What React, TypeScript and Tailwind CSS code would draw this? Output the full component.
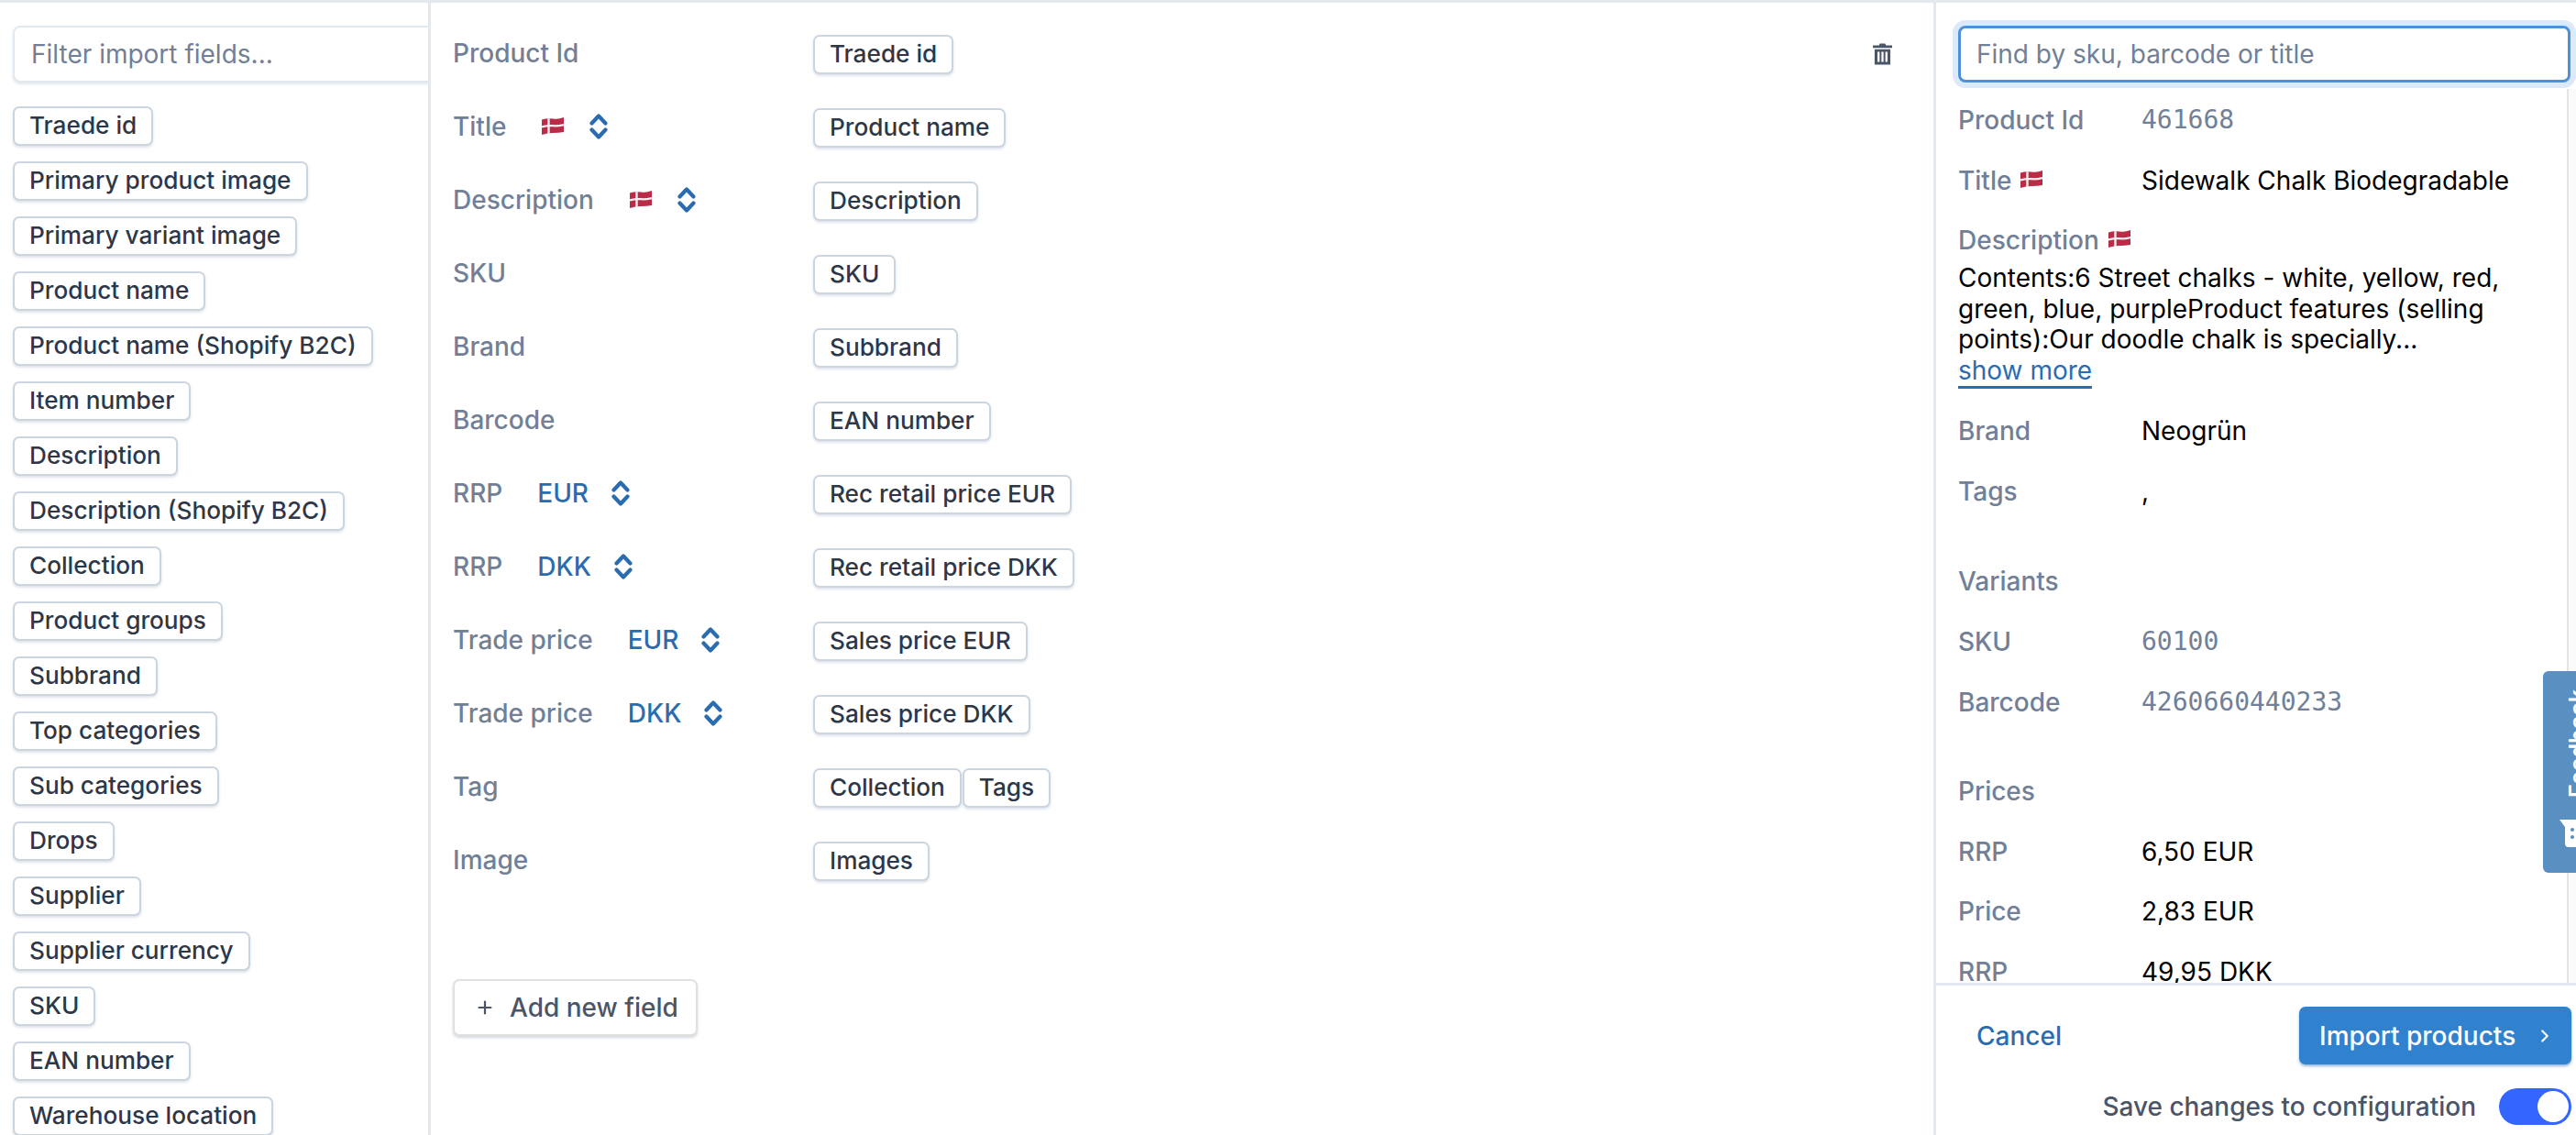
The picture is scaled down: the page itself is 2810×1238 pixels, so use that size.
import React from 'react';
import { Plus, ChevronRight } from 'lucide-react';

const importFields = [
  'Traede id',
  'Primary product image',
  'Primary variant image',
  'Product name',
  'Product name (Shopify B2C)',
  'Item number',
  'Description',
  'Description (Shopify B2C)',
  'Collection',
  'Product groups',
  'Subbrand',
  'Top categories',
  'Sub categories',
  'Drops',
  'Supplier',
  'Supplier currency',
  'SKU',
  'EAN number',
  'Warehouse location',
];

interface Mapping {
  label: string;
  flag?: boolean;
  currency?: string;
  chips: string[];
}

const mappings: Mapping[] = [
  { label: 'Product Id', chips: ['Traede id'] },
  { label: 'Title', flag: true, chips: ['Product name'] },
  { label: 'Description', flag: true, chips: ['Description'] },
  { label: 'SKU', chips: ['SKU'] },
  { label: 'Brand', chips: ['Subbrand'] },
  { label: 'Barcode', chips: ['EAN number'] },
  { label: 'RRP', currency: 'EUR', chips: ['Rec retail price EUR'] },
  { label: 'RRP', currency: 'DKK', chips: ['Rec retail price DKK'] },
  { label: 'Trade price', currency: 'EUR', chips: ['Sales price EUR'] },
  { label: 'Trade price', currency: 'DKK', chips: ['Sales price DKK'] },
  { label: 'Tag', chips: ['Collection', 'Tags'] },
  { label: 'Image', chips: ['Images'] },
];

const DanishFlag = ({ className = '' }: { className?: string }) => (
  <svg viewBox="0 0 24 19" className={`w-6 h-[19px] shrink-0 ${className}`}>
    <path d="M0 2.5 Q6 0.5 12 1.5 T24 0 V16 Q18 17 12 17 T0 19 Z" fill="#bb2a47" />
    <path d="M7.5 1.2 V18" stroke="#f6eef0" strokeWidth="2.4" fill="none" />
    <path d="M0 10.5 Q6 8.8 12 9.2 T24 8" stroke="#f6eef0" strokeWidth="2.2" fill="none" />
  </svg>
);

const UpDown = ({ className = '' }: { className?: string }) => (
  <svg viewBox="0 0 20 28" className={`w-5 h-7 shrink-0 ${className}`} fill="none" stroke="#2b6cb0" strokeWidth="4.2" strokeLinecap="round" strokeLinejoin="round">
    <path d="M2.5 10.5 L10 2.5 L17.5 10.5" />
    <path d="M2.5 17.5 L10 25.5 L17.5 17.5" />
  </svg>
);

const Chip = ({ children }: { children: React.ReactNode }) => (
  <span className="inline-flex items-center h-[43px] px-[16px] pb-[1px] bg-white border-2 border-[#cbd5e0] rounded-[7px] shadow-[0_2px_3px_rgba(160,174,192,0.35)] text-[26.2px] font-medium text-[#2d3748] whitespace-nowrap">
    {children}
  </span>
);

const Label = ({ children }: { children: React.ReactNode }) => (
  <span className="text-[28px] font-medium text-[#718096] leading-[34px] whitespace-nowrap">{children}</span>
);

const InfoRow = ({ label, value, mono, className = '' }: { label: React.ReactNode; value: string; mono?: boolean; className?: string }) => (
  <div className={`flex h-[34px] items-center shrink-0 ${className}`}>
    <div className="w-[200px] flex items-center gap-[10px] shrink-0">{label}</div>
    <span className={mono ? "font-['DejaVu_Sans_Mono',monospace] text-[28px] text-[#718096]" : 'text-[28px] text-black'}>{value}</span>
  </div>
);

export default function App() {
  return (
    <div className="relative w-full h-[1238px] overflow-hidden bg-white border-t-[3px] border-[#e6e8f0] flex font-[Inter,sans-serif]">
      {/* left column, list of fields from the file */}
      <aside className="w-[470px] shrink-0 border-r-[3px] border-[#e2e8f0] overflow-hidden pl-[14px] pt-[25px]">
        <input
          placeholder="Filter import fields..."
          className="w-[520px] h-[62px] px-[18px] text-[28px] bg-white border-2 border-[#e2e8f0] rounded-[8px] shadow-[0_2px_3px_rgba(160,174,192,0.3)] outline-none placeholder:text-[#718096]"
        />
        <div className="mt-[26px] flex flex-col items-start gap-[17px]">
          {importFields.map((field) => (
            <Chip key={field}>{field}</Chip>
          ))}
        </div>
      </aside>

      {/* middle column, field mapping */}
      <main className="w-[1642px] shrink-0 relative pl-[24px] pt-[35px]">
        {mappings.map((row, i) => (
          <div key={i} className="flex h-[80px] items-start">
            <div className="w-[393px] shrink-0 h-[43px] flex items-center -mt-[2px]">
              <Label>{row.label}</Label>
              {row.flag && <DanishFlag className="ml-[39px]" />}
              {row.currency && <span className="ml-[38px] text-[28px] font-medium text-[#2b6cb0] leading-[34px]">{row.currency}</span>}
              {row.flag && <UpDown className="ml-[28px]" />}
              {row.currency && <UpDown className="ml-[25px]" />}
            </div>
            <div className="flex gap-[1px]">
              {row.chips.map((chip) => (
                <Chip key={chip}>{chip}</Chip>
              ))}
            </div>
          </div>
        ))}
        <button className="mt-[70px] flex items-center w-[267px] h-[62px] pl-[22px] bg-white border-2 border-[#e0e0e0] rounded-[7px] shadow-[0_2px_3px_rgba(113,128,150,0.3)] text-[28px] font-medium text-[#4a5568]">
          <Plus className="w-[22px] h-[22px] mr-[16px]" strokeWidth={2.4} />
          Add new field
        </button>
        <svg viewBox="0 0 22 24" className="absolute left-[1573px] top-[44px] w-[21px] h-[24px]">
          <path d="M8 0 H14 L15 2 H22 V5 H0 V2 H7 Z M2 6.5 H20 V24 H2 Z" fill="#4a5568" />
          <path d="M6.5 9.5 V21 M11 9.5 V21 M15.5 9.5 V21" stroke="#fff" strokeWidth="2.4" />
        </svg>
      </main>

      {/* right column, preview of one product */}
      <section className="flex-1 min-w-0 border-l-[3px] border-[#e2e8f0] -ml-[3px] flex flex-col">
        <div className="pl-[24px] pr-[6px] pt-[25px] relative z-10">
          <input
            placeholder="Find by sku, barcode or title"
            className="w-full h-[62px] px-[17px] text-[28px] bg-white border-[3px] border-[#4f91d8] rounded-[8px] shadow-[0_0_0_6px_#dbe9fa] outline-none placeholder:text-[#718096]"
          />
        </div>
        <div className="mt-[7px] h-[975px] shrink-0 flex overflow-hidden">
          <div className="flex-1 min-w-0 pl-[24px] pr-[10px] pt-[17px] flex flex-col">
            <InfoRow label={<Label>Product Id</Label>} value="461668" mono />
            <InfoRow className="mt-[32px]" label={<><Label>Title</Label><DanishFlag className="-mt-[4px]" /></>} value="Sidewalk Chalk Biodegradable" />
            <div className="mt-[31px] flex items-center gap-[10px] h-[34px] shrink-0">
              <Label>Description</Label>
              <DanishFlag className="-mt-[4px]" />
            </div>
            <p className="mt-[8px] text-[28px] leading-[33.6px] text-black shrink-0">
              Contents:6 Street chalks - white, yellow, red, green, blue, purpleProduct features (selling points):Our doodle chalk is specially...
            </p>
            <a className="self-start text-[28px] leading-[33.6px] text-[#2b6cb0] border-b-[3px] border-[#2b6cb0] shrink-0">show more</a>
            <InfoRow className="mt-[29px]" label={<Label>Brand</Label>} value="Neogrün" />
            <InfoRow className="mt-[32px]" label={<Label>Tags</Label>} value="," />
            <div className="mt-[64px] h-[34px] shrink-0"><Label>Variants</Label></div>
            <InfoRow className="mt-[32px]" label={<Label>SKU</Label>} value="60100" mono />
            <InfoRow className="mt-[32px]" label={<Label>Barcode</Label>} value="4260660440233" mono />
            <div className="mt-[63px] h-[34px] shrink-0"><Label>Prices</Label></div>
            <InfoRow className="mt-[32px]" label={<Label>RRP</Label>} value="6,50 EUR" />
            <InfoRow className="mt-[31px]" label={<Label>Price</Label>} value="2,83 EUR" />
            <InfoRow className="mt-[32px]" label={<Label>RRP</Label>} value="49,95 DKK" />
          </div>
          <div className="w-[10px] shrink-0 border-l-2 border-[#e4e4e4] bg-[#fafafa]" />
        </div>
        <div className="flex-1 border-t-[3px] border-[#e2e8f0] pl-[44px] pr-[5px] pt-[23px]">
          <div className="flex items-center justify-between">
            <span className="text-[28px] font-medium text-[#2b6cb0]">Cancel</span>
            <button className="flex items-center justify-between w-[297px] h-[63px] pl-[22px] pr-[18px] bg-[#3182ce] rounded-[7px] shadow-[0_2px_3px_rgba(43,108,176,0.5)] text-[28px] font-medium text-white">
              Import products
              <ChevronRight className="w-[22px] h-[22px]" strokeWidth={2.4} />
            </button>
          </div>
          <div className="mt-[25px] flex items-center justify-end gap-[25px]">
            <span className="text-[28px] font-medium text-[#4a5568]">Save changes to configuration</span>
            <span className="w-[79px] h-[40px] rounded-full bg-[#3366ff] flex items-center justify-end pr-[3px]">
              <span className="w-[34px] h-[34px] rounded-full bg-white" />
            </span>
          </div>
        </div>
      </section>

      {/* feedback tab stuck on the window edge */}
      <div className="absolute left-[2774px] top-[729px] w-[50px] h-[220px] bg-[#5a8fc2] rounded-l-[6px] overflow-hidden">
        <span className="absolute left-[-32px] top-[53px] w-[140px] -rotate-90 text-[25px] font-semibold text-white leading-[30px] whitespace-nowrap">Feedback</span>
        <svg viewBox="0 0 30 30" className="absolute left-[18px] top-[162px] w-[30px] h-[30px]">
          <path d="M0 0 H26 Q30 0 30 4 V26 Q30 30 26 30 H10 Q6 30 6 26 V8 Z" fill="#fff" />
          <circle cx="14" cy="11" r="2" fill="#5a8fc2" />
          <circle cx="14" cy="19" r="2" fill="#5a8fc2" />
        </svg>
      </div>
    </div>
  );
}
